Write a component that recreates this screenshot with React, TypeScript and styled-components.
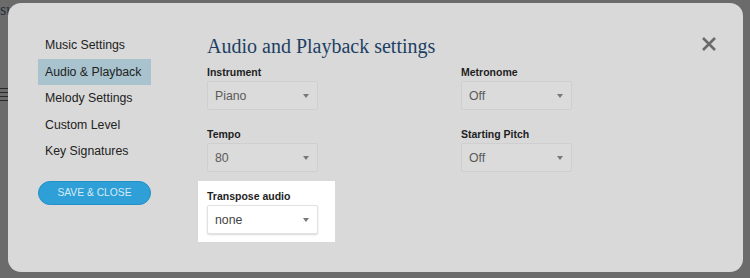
import styled, { createGlobalStyle } from "styled-components";

// Global ------------------------------------------------------------------------
const GlobalStyle = createGlobalStyle`
  html, body {
    margin: 0;
    padding: 0;
    background: #6b6b6b;
    font-family: "Liberation Sans", Arial, sans-serif;
  }
  * { box-sizing: border-box; }
`;

const navItems = [
  "Music Settings",
  "Audio & Playback",
  "Melody Settings",
  "Custom Level",
  "Key Signatures",
];

interface Field {
  label: string;
  value: string;
  highlight?: boolean;
}

const fields: Field[] = [
  { label: "Instrument", value: "Piano" },
  { label: "Metronome", value: "Off" },
  { label: "Tempo", value: "80" },
  { label: "Starting Pitch", value: "Off" },
  { label: "Transpose audio", value: "none", highlight: true },
];

// Component ---------------------------------------------------------------------
const App = () => {
  return (
    <>
      <GlobalStyle />
      <Backdrop>
        <PageBehind>
          <Ghost>su</Ghost>
          <Staff>
            <span />
            <span />
            <span />
            <span />
          </Staff>
        </PageBehind>
        <Modal>
          <Sidebar>
            <Nav>
              {navItems.map((item) => (
                <NavItem key={item} active={item === "Audio & Playback"}>
                  {item}
                </NavItem>
              ))}
            </Nav>
            <SaveButton>SAVE &amp; CLOSE</SaveButton>
          </Sidebar>
          <Main>
            <Title>Audio and Playback settings</Title>
            <Grid>
              {fields.map((f) => (
                <FieldBox key={f.label} highlight={!!f.highlight}>
                  <Label>{f.label}</Label>
                  <Select highlight={!!f.highlight}>
                    <span>{f.value}</span>
                    <Arrow />
                  </Select>
                </FieldBox>
              ))}
            </Grid>
          </Main>
          <CloseButton aria-label="close">
            <svg width="16" height="16" viewBox="0 0 16 16">
              <path
                d="M2 2 L14 14 M14 2 L2 14"
                stroke="#6a6a6a"
                strokeWidth="2.6"
                strokeLinecap="butt"
              />
            </svg>
          </CloseButton>
        </Modal>
      </Backdrop>
    </>
  );
};

export default App;

// Styled ------------------------------------------------------------------------

const Backdrop = styled.div`
  position: relative;
  width: 750px;
  height: 278px;
  overflow: hidden;
  background: #6b6b6b;
  padding: 3px 7px 6px 8px;
`;

const PageBehind = styled.div`
  position: absolute;
  inset: 0;
  pointer-events: none;
`;

const Ghost = styled.div`
  position: absolute;
  left: 0;
  top: 1px;
  font-family: "Liberation Serif", serif;
  font-size: 16px;
  line-height: 18px;
  color: #23303c;
`;

const Staff = styled.div`
  position: absolute;
  left: 0;
  top: 88px;
  width: 8px;
  display: flex;
  flex-direction: column;
  gap: 3px;

  span {
    display: block;
    height: 1px;
    background: #2a2a2a;
  }
`;

const Modal = styled.div`
  position: relative;
  display: flex;
  gap: 56px;
  height: 100%;
  background: #d9d9d9;
  border-radius: 13px;
  padding: 29px 30px 0 30px;
`;

const Sidebar = styled.div`
  width: 113px;
  display: flex;
  flex-direction: column;
`;

const Nav = styled.div`
  display: flex;
  flex-direction: column;
`;

const NavItem = styled.div<{ active: boolean }>`
  height: 26.5px;
  display: flex;
  align-items: center;
  padding-left: 7px;
  font-size: 12.3px;
  color: #222;
  background: ${({ active }) => (active ? "#a8c3ce" : "transparent")};
`;

const SaveButton = styled.button`
  margin-top: 16px;
  height: 24px;
  width: 113px;
  border-radius: 12px;
  border: 1px solid #2390c8;
  background: #2e9fd7;
  color: #d5eaf5;
  font-family: "Liberation Sans", Arial, sans-serif;
  font-size: 10.3px;
  padding: 0;
`;

const Main = styled.div`
  flex: 1;
  display: flex;
  flex-direction: column;
`;

const Title = styled.h1`
  margin: 0;
  font-family: "Liberation Serif", serif;
  font-weight: normal;
  font-size: 20px;
  line-height: 24px;
  height: 24px;
  margin-top: 2px;
  color: #1d3f63;
`;

const Grid = styled.div`
  display: grid;
  grid-template-columns: 254px 200px;
  row-gap: 17px;
  margin-top: 7px;
  margin-left: -9px;
`;

const FieldBox = styled.div<{ highlight: boolean }>`
  width: 137px;
  padding: ${({ highlight }) => (highlight ? "8px 9px 8px" : "0 9px")};
  margin-top: ${({ highlight }) => (highlight ? "-8px" : "0")};
  background: ${({ highlight }) => (highlight ? "#ffffff" : "transparent")};
`;

const Label = styled.div`
  font-size: 10.5px;
  font-weight: bold;
  color: #1e1e1e;
  line-height: 15px;
`;

const Select = styled.div<{ highlight: boolean }>`
  margin-top: 1px;
  width: 111px;
  height: 29px;
  display: flex;
  align-items: center;
  justify-content: space-between;
  padding: 0 8px 0 7px;
  font-size: 12.3px;
  color: ${({ highlight }) => (highlight ? "#444" : "#5a5a5a")};
  background: ${({ highlight }) => (highlight ? "#ffffff" : "#dbdbdb")};
  border: 1px solid ${({ highlight }) => (highlight ? "#e2e2e2" : "#cfcfcf")};
  border-radius: 2px;
  box-shadow: ${({ highlight }) =>
    highlight ? "0 1px 2px rgba(0,0,0,0.15)" : "none"};
`;

const Arrow = styled.span`
  width: 0;
  height: 0;
  border-left: 3.5px solid transparent;
  border-right: 3.5px solid transparent;
  border-top: 4.5px solid #777;
`;

const CloseButton = styled.div`
  position: absolute;
  top: 33px;
  right: 26px;
  width: 16px;
  height: 16px;
  display: flex;
`;
